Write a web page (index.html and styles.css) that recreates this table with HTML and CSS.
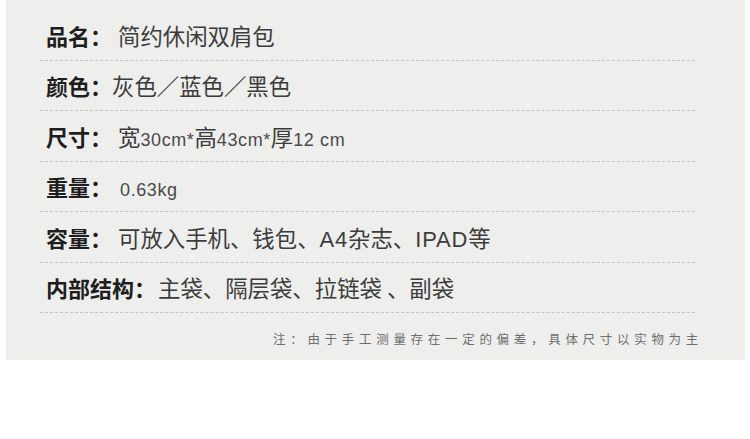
FILE: index.html
```html
<!DOCTYPE html>
<html lang="zh-CN">
<head>
    <meta charset="UTF-8">
    <meta name="viewport" content="width=device-width, initial-scale=1.0">
    <title>产品参数</title>
    <link rel="stylesheet" href="styles.css">
</head>
<body>
    <div class="panel">
        <div class="row">
            <span class="label">品名：</span>
            <span class="value gap">简约休闲双肩包</span>
        </div>
        <div class="row">
            <span class="label">颜色：</span>
            <span class="value">灰色／蓝色／黑色</span>
        </div>
        <div class="row">
            <span class="label">尺寸：</span>
            <span class="value gap">宽<span class="num">30cm*</span>高<span class="num">43cm*</span>厚<span class="num">12 cm</span></span>
        </div>
        <div class="row">
            <span class="label">重量：</span>
            <span class="value wide-gap"><span class="num">0.63kg</span></span>
        </div>
        <div class="row">
            <span class="label">容量：</span>
            <span class="value gap">可放入手机、钱包、<span class="latin">A4</span>杂志、<span class="latin">IPAD</span>等</span>
        </div>
        <div class="row">
            <span class="label">内部结构：</span>
            <span class="value small-gap">主袋、隔层袋、拉链袋 、副袋</span>
        </div>
        <p class="note">注：由于手工测量存在一定的偏差，具体尺寸以实物为主</p>
    </div>
</body>
</html>
```

FILE: styles.css
```css
body {
    margin: 0;
    background-color: #fff;
    font-family: "Noto Sans CJK SC", "Liberation Sans", sans-serif;
}
.panel {
    margin-left: 6px;
    width: 739px;
    height: 360px;
    padding-top: 10px;
    box-sizing: border-box;
    background-color: #eeeeec;
}
.row {
    display: flex;
    align-items: center;
    margin-left: 34px;
    width: 655px;
    height: 50.5px;
    padding-left: 6px;
    box-sizing: border-box;
    border-bottom: 1px dashed #c4c4c2;
}
.label {
    font-size: 22px;
    font-weight: bold;
    color: #1e1e1e;
}
.value {
    font-size: 22.4px;
    color: #3c3c3c;
    white-space: nowrap;
}
.gap {
    margin-left: 6px;
}
.wide-gap {
    margin-left: 8px;
}
.small-gap {
    margin-left: 2px;
}
.num {
    font-family: "Liberation Sans", sans-serif;
    font-size: 18px;
    letter-spacing: 0.6px;
    color: #4a4a4a;
}
.latin {
    font-family: "Liberation Sans", sans-serif;
    font-size: 22px;
    letter-spacing: 0.8px;
}
.note {
    margin: 16px 0 0;
    padding-right: 42px;
    text-align: right;
    font-size: 12.5px;
    letter-spacing: 4.7px;
    color: #6e6e6e;
}
```
